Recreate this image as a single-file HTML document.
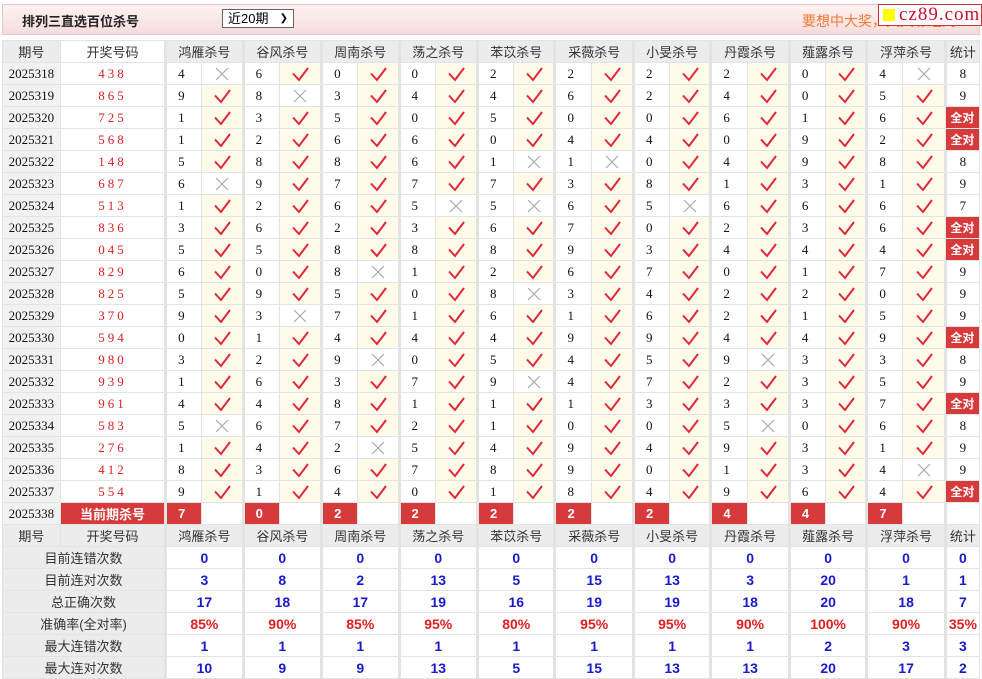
<!DOCTYPE html>
<html><head><meta charset="utf-8"><style>
body{margin:0;background:#fff;width:982px;height:679px;overflow:hidden;font-family:"Liberation Sans","Noto Sans CJK SC",sans-serif;}
.bar{position:absolute;left:2px;top:4px;width:976px;height:29px;background:linear-gradient(#fff2f2,#f6dcdc);border:1px solid #e6c8c8;}
.ttl{position:absolute;left:22px;top:11px;font-size:13px;font-weight:bold;color:#222;}
.sel{position:absolute;left:222px;top:9px;width:72px;height:19px;border:1px solid #666;background:#fff;font-size:13px;line-height:18px;padding-left:5px;box-sizing:border-box;}
.sel span{position:absolute;right:5px;top:0;font-size:10px;}
.ad{position:absolute;left:802px;top:11px;font-size:14px;color:#f07a30;}
.logo{position:absolute;left:878px;top:4px;width:104px;height:22px;background:#fff;border:1px solid #c33;box-sizing:border-box;font-family:"Liberation Serif",serif;font-size:19px;color:#c8102e;line-height:20px;padding-left:20px;letter-spacing:1px}
.logo i{position:absolute;left:4px;top:4px;width:12px;height:12px;background:#ff0;}
table{position:absolute;left:2px;top:40px;border-collapse:collapse;table-layout:fixed;width:978px;}
td{height:21px;border:1px solid #e3e3e3;padding:0;font-size:13px;text-align:center;font-family:"Liberation Serif","Noto Serif CJK SC",serif;color:#111;overflow:hidden;white-space:nowrap;}
tr.h td{background:#ececec;font-family:"Liberation Sans","Noto Sans CJK SC",sans-serif;color:#333;}
tr.h td.w{background:#fff}
td.q{background:#f2f2f2;}
td.k{color:#e02020;letter-spacing:3px;}
td.n{text-align:left;padding-left:11px;border-left:3px solid #e3e3e3;}
td.c{background:#fffbea;}
td.c svg,td.x svg{display:block;margin:0 auto;width:20px;height:16px}
td.g{border-left:3px solid #e3e3e3;}
td.all{background:#d63a3a;color:#fff;font-weight:bold;font-family:"Liberation Sans","Noto Sans CJK SC",sans-serif;font-size:12px}
td.cur{background:#d63a3a;color:#fff;font-weight:bold;font-family:"Liberation Sans","Noto Sans CJK SC",sans-serif}
td.kn{background:#d63a3a;color:#fff;font-weight:bold;text-align:left;padding-left:11px;border-left:3px solid #e3e3e3;font-family:"Liberation Sans",sans-serif}
td.l{background:#ececec;font-family:"Liberation Sans","Noto Sans CJK SC",sans-serif;color:#333;}
td.v{color:#1a1acc;font-weight:bold;font-family:"Liberation Sans",sans-serif;font-size:14px;border-left:3px solid #e3e3e3;}
td.r{color:#e02020;}
</style></head><body>
<svg width="0" height="0" style="position:absolute"><defs>
<symbol id="c" viewBox="0 0 20 16"><path d="M3 7.5 L9 14 L18 2" fill="none" stroke="#e0283a" stroke-width="2"/></symbol>
<symbol id="x" viewBox="0 0 20 16"><path d="M4 2 L16 14 M16 2 L4 14" fill="none" stroke="#aaa" stroke-width="1.2"/></symbol>
</defs></svg>
<div class="bar"></div>
<div class="ttl">排列三直选百位杀号</div>
<div class="sel">近20期<span>&#10095;</span></div>
<div class="ad">要想中大奖，天天彩经网</div>
<div class="logo"><i></i>cz89.com</div>
<table>
<colgroup><col style="width:56px"><col style="width:102px">
<col style="width:35px"><col style="width:40px"><col style="width:35px"><col style="width:41px"><col style="width:35px"><col style="width:40px"><col style="width:35px"><col style="width:41px"><col style="width:35px"><col style="width:40px"><col style="width:35px"><col style="width:41px"><col style="width:35px"><col style="width:40px"><col style="width:35px"><col style="width:41px"><col style="width:35px"><col style="width:40px"><col style="width:35px"><col style="width:41px">
<col style="width:33px"></colgroup>
<tr class="h"><td>期号</td><td class="w">开奖号码</td><td colspan="2" class="g">鸿雁杀号</td><td colspan="2" class="g">谷风杀号</td><td colspan="2" class="g">周南杀号</td><td colspan="2" class="g">荡之杀号</td><td colspan="2" class="g">苯苡杀号</td><td colspan="2" class="g">采薇杀号</td><td colspan="2" class="g">小旻杀号</td><td colspan="2" class="g">丹霞杀号</td><td colspan="2" class="g">薤露杀号</td><td colspan="2" class="g">浮萍杀号</td><td class="g">统计</td></tr>
<tr><td class="q">2025318</td><td class="k">438</td><td class="n">4</td><td class="x"><svg><use href="#x"/></svg></td><td class="n">6</td><td class="c"><svg><use href="#c"/></svg></td><td class="n">0</td><td class="c"><svg><use href="#c"/></svg></td><td class="n">0</td><td class="c"><svg><use href="#c"/></svg></td><td class="n">2</td><td class="c"><svg><use href="#c"/></svg></td><td class="n">2</td><td class="c"><svg><use href="#c"/></svg></td><td class="n">2</td><td class="c"><svg><use href="#c"/></svg></td><td class="n">2</td><td class="c"><svg><use href="#c"/></svg></td><td class="n">0</td><td class="c"><svg><use href="#c"/></svg></td><td class="n">4</td><td class="x"><svg><use href="#x"/></svg></td><td class="g">8</td></tr>
<tr><td class="q">2025319</td><td class="k">865</td><td class="n">9</td><td class="c"><svg><use href="#c"/></svg></td><td class="n">8</td><td class="x"><svg><use href="#x"/></svg></td><td class="n">3</td><td class="c"><svg><use href="#c"/></svg></td><td class="n">4</td><td class="c"><svg><use href="#c"/></svg></td><td class="n">4</td><td class="c"><svg><use href="#c"/></svg></td><td class="n">6</td><td class="c"><svg><use href="#c"/></svg></td><td class="n">2</td><td class="c"><svg><use href="#c"/></svg></td><td class="n">4</td><td class="c"><svg><use href="#c"/></svg></td><td class="n">0</td><td class="c"><svg><use href="#c"/></svg></td><td class="n">5</td><td class="c"><svg><use href="#c"/></svg></td><td class="g">9</td></tr>
<tr><td class="q">2025320</td><td class="k">725</td><td class="n">1</td><td class="c"><svg><use href="#c"/></svg></td><td class="n">3</td><td class="c"><svg><use href="#c"/></svg></td><td class="n">5</td><td class="c"><svg><use href="#c"/></svg></td><td class="n">0</td><td class="c"><svg><use href="#c"/></svg></td><td class="n">5</td><td class="c"><svg><use href="#c"/></svg></td><td class="n">0</td><td class="c"><svg><use href="#c"/></svg></td><td class="n">0</td><td class="c"><svg><use href="#c"/></svg></td><td class="n">6</td><td class="c"><svg><use href="#c"/></svg></td><td class="n">1</td><td class="c"><svg><use href="#c"/></svg></td><td class="n">6</td><td class="c"><svg><use href="#c"/></svg></td><td class="all">全对</td></tr>
<tr><td class="q">2025321</td><td class="k">568</td><td class="n">1</td><td class="c"><svg><use href="#c"/></svg></td><td class="n">2</td><td class="c"><svg><use href="#c"/></svg></td><td class="n">6</td><td class="c"><svg><use href="#c"/></svg></td><td class="n">6</td><td class="c"><svg><use href="#c"/></svg></td><td class="n">0</td><td class="c"><svg><use href="#c"/></svg></td><td class="n">4</td><td class="c"><svg><use href="#c"/></svg></td><td class="n">4</td><td class="c"><svg><use href="#c"/></svg></td><td class="n">0</td><td class="c"><svg><use href="#c"/></svg></td><td class="n">9</td><td class="c"><svg><use href="#c"/></svg></td><td class="n">2</td><td class="c"><svg><use href="#c"/></svg></td><td class="all">全对</td></tr>
<tr><td class="q">2025322</td><td class="k">148</td><td class="n">5</td><td class="c"><svg><use href="#c"/></svg></td><td class="n">8</td><td class="c"><svg><use href="#c"/></svg></td><td class="n">8</td><td class="c"><svg><use href="#c"/></svg></td><td class="n">6</td><td class="c"><svg><use href="#c"/></svg></td><td class="n">1</td><td class="x"><svg><use href="#x"/></svg></td><td class="n">1</td><td class="x"><svg><use href="#x"/></svg></td><td class="n">0</td><td class="c"><svg><use href="#c"/></svg></td><td class="n">4</td><td class="c"><svg><use href="#c"/></svg></td><td class="n">9</td><td class="c"><svg><use href="#c"/></svg></td><td class="n">8</td><td class="c"><svg><use href="#c"/></svg></td><td class="g">8</td></tr>
<tr><td class="q">2025323</td><td class="k">687</td><td class="n">6</td><td class="x"><svg><use href="#x"/></svg></td><td class="n">9</td><td class="c"><svg><use href="#c"/></svg></td><td class="n">7</td><td class="c"><svg><use href="#c"/></svg></td><td class="n">7</td><td class="c"><svg><use href="#c"/></svg></td><td class="n">7</td><td class="c"><svg><use href="#c"/></svg></td><td class="n">3</td><td class="c"><svg><use href="#c"/></svg></td><td class="n">8</td><td class="c"><svg><use href="#c"/></svg></td><td class="n">1</td><td class="c"><svg><use href="#c"/></svg></td><td class="n">3</td><td class="c"><svg><use href="#c"/></svg></td><td class="n">1</td><td class="c"><svg><use href="#c"/></svg></td><td class="g">9</td></tr>
<tr><td class="q">2025324</td><td class="k">513</td><td class="n">1</td><td class="c"><svg><use href="#c"/></svg></td><td class="n">2</td><td class="c"><svg><use href="#c"/></svg></td><td class="n">6</td><td class="c"><svg><use href="#c"/></svg></td><td class="n">5</td><td class="x"><svg><use href="#x"/></svg></td><td class="n">5</td><td class="x"><svg><use href="#x"/></svg></td><td class="n">6</td><td class="c"><svg><use href="#c"/></svg></td><td class="n">5</td><td class="x"><svg><use href="#x"/></svg></td><td class="n">6</td><td class="c"><svg><use href="#c"/></svg></td><td class="n">6</td><td class="c"><svg><use href="#c"/></svg></td><td class="n">6</td><td class="c"><svg><use href="#c"/></svg></td><td class="g">7</td></tr>
<tr><td class="q">2025325</td><td class="k">836</td><td class="n">3</td><td class="c"><svg><use href="#c"/></svg></td><td class="n">6</td><td class="c"><svg><use href="#c"/></svg></td><td class="n">2</td><td class="c"><svg><use href="#c"/></svg></td><td class="n">3</td><td class="c"><svg><use href="#c"/></svg></td><td class="n">6</td><td class="c"><svg><use href="#c"/></svg></td><td class="n">7</td><td class="c"><svg><use href="#c"/></svg></td><td class="n">0</td><td class="c"><svg><use href="#c"/></svg></td><td class="n">2</td><td class="c"><svg><use href="#c"/></svg></td><td class="n">3</td><td class="c"><svg><use href="#c"/></svg></td><td class="n">6</td><td class="c"><svg><use href="#c"/></svg></td><td class="all">全对</td></tr>
<tr><td class="q">2025326</td><td class="k">045</td><td class="n">5</td><td class="c"><svg><use href="#c"/></svg></td><td class="n">5</td><td class="c"><svg><use href="#c"/></svg></td><td class="n">8</td><td class="c"><svg><use href="#c"/></svg></td><td class="n">8</td><td class="c"><svg><use href="#c"/></svg></td><td class="n">8</td><td class="c"><svg><use href="#c"/></svg></td><td class="n">9</td><td class="c"><svg><use href="#c"/></svg></td><td class="n">3</td><td class="c"><svg><use href="#c"/></svg></td><td class="n">4</td><td class="c"><svg><use href="#c"/></svg></td><td class="n">4</td><td class="c"><svg><use href="#c"/></svg></td><td class="n">4</td><td class="c"><svg><use href="#c"/></svg></td><td class="all">全对</td></tr>
<tr><td class="q">2025327</td><td class="k">829</td><td class="n">6</td><td class="c"><svg><use href="#c"/></svg></td><td class="n">0</td><td class="c"><svg><use href="#c"/></svg></td><td class="n">8</td><td class="x"><svg><use href="#x"/></svg></td><td class="n">1</td><td class="c"><svg><use href="#c"/></svg></td><td class="n">2</td><td class="c"><svg><use href="#c"/></svg></td><td class="n">6</td><td class="c"><svg><use href="#c"/></svg></td><td class="n">7</td><td class="c"><svg><use href="#c"/></svg></td><td class="n">0</td><td class="c"><svg><use href="#c"/></svg></td><td class="n">1</td><td class="c"><svg><use href="#c"/></svg></td><td class="n">7</td><td class="c"><svg><use href="#c"/></svg></td><td class="g">9</td></tr>
<tr><td class="q">2025328</td><td class="k">825</td><td class="n">5</td><td class="c"><svg><use href="#c"/></svg></td><td class="n">9</td><td class="c"><svg><use href="#c"/></svg></td><td class="n">5</td><td class="c"><svg><use href="#c"/></svg></td><td class="n">0</td><td class="c"><svg><use href="#c"/></svg></td><td class="n">8</td><td class="x"><svg><use href="#x"/></svg></td><td class="n">3</td><td class="c"><svg><use href="#c"/></svg></td><td class="n">4</td><td class="c"><svg><use href="#c"/></svg></td><td class="n">2</td><td class="c"><svg><use href="#c"/></svg></td><td class="n">2</td><td class="c"><svg><use href="#c"/></svg></td><td class="n">0</td><td class="c"><svg><use href="#c"/></svg></td><td class="g">9</td></tr>
<tr><td class="q">2025329</td><td class="k">370</td><td class="n">9</td><td class="c"><svg><use href="#c"/></svg></td><td class="n">3</td><td class="x"><svg><use href="#x"/></svg></td><td class="n">7</td><td class="c"><svg><use href="#c"/></svg></td><td class="n">1</td><td class="c"><svg><use href="#c"/></svg></td><td class="n">6</td><td class="c"><svg><use href="#c"/></svg></td><td class="n">1</td><td class="c"><svg><use href="#c"/></svg></td><td class="n">6</td><td class="c"><svg><use href="#c"/></svg></td><td class="n">2</td><td class="c"><svg><use href="#c"/></svg></td><td class="n">1</td><td class="c"><svg><use href="#c"/></svg></td><td class="n">5</td><td class="c"><svg><use href="#c"/></svg></td><td class="g">9</td></tr>
<tr><td class="q">2025330</td><td class="k">594</td><td class="n">0</td><td class="c"><svg><use href="#c"/></svg></td><td class="n">1</td><td class="c"><svg><use href="#c"/></svg></td><td class="n">4</td><td class="c"><svg><use href="#c"/></svg></td><td class="n">4</td><td class="c"><svg><use href="#c"/></svg></td><td class="n">4</td><td class="c"><svg><use href="#c"/></svg></td><td class="n">9</td><td class="c"><svg><use href="#c"/></svg></td><td class="n">9</td><td class="c"><svg><use href="#c"/></svg></td><td class="n">4</td><td class="c"><svg><use href="#c"/></svg></td><td class="n">4</td><td class="c"><svg><use href="#c"/></svg></td><td class="n">9</td><td class="c"><svg><use href="#c"/></svg></td><td class="all">全对</td></tr>
<tr><td class="q">2025331</td><td class="k">980</td><td class="n">3</td><td class="c"><svg><use href="#c"/></svg></td><td class="n">2</td><td class="c"><svg><use href="#c"/></svg></td><td class="n">9</td><td class="x"><svg><use href="#x"/></svg></td><td class="n">0</td><td class="c"><svg><use href="#c"/></svg></td><td class="n">5</td><td class="c"><svg><use href="#c"/></svg></td><td class="n">4</td><td class="c"><svg><use href="#c"/></svg></td><td class="n">5</td><td class="c"><svg><use href="#c"/></svg></td><td class="n">9</td><td class="x"><svg><use href="#x"/></svg></td><td class="n">3</td><td class="c"><svg><use href="#c"/></svg></td><td class="n">3</td><td class="c"><svg><use href="#c"/></svg></td><td class="g">8</td></tr>
<tr><td class="q">2025332</td><td class="k">939</td><td class="n">1</td><td class="c"><svg><use href="#c"/></svg></td><td class="n">6</td><td class="c"><svg><use href="#c"/></svg></td><td class="n">3</td><td class="c"><svg><use href="#c"/></svg></td><td class="n">7</td><td class="c"><svg><use href="#c"/></svg></td><td class="n">9</td><td class="x"><svg><use href="#x"/></svg></td><td class="n">4</td><td class="c"><svg><use href="#c"/></svg></td><td class="n">7</td><td class="c"><svg><use href="#c"/></svg></td><td class="n">2</td><td class="c"><svg><use href="#c"/></svg></td><td class="n">3</td><td class="c"><svg><use href="#c"/></svg></td><td class="n">5</td><td class="c"><svg><use href="#c"/></svg></td><td class="g">9</td></tr>
<tr><td class="q">2025333</td><td class="k">961</td><td class="n">4</td><td class="c"><svg><use href="#c"/></svg></td><td class="n">4</td><td class="c"><svg><use href="#c"/></svg></td><td class="n">8</td><td class="c"><svg><use href="#c"/></svg></td><td class="n">1</td><td class="c"><svg><use href="#c"/></svg></td><td class="n">1</td><td class="c"><svg><use href="#c"/></svg></td><td class="n">1</td><td class="c"><svg><use href="#c"/></svg></td><td class="n">3</td><td class="c"><svg><use href="#c"/></svg></td><td class="n">3</td><td class="c"><svg><use href="#c"/></svg></td><td class="n">3</td><td class="c"><svg><use href="#c"/></svg></td><td class="n">7</td><td class="c"><svg><use href="#c"/></svg></td><td class="all">全对</td></tr>
<tr><td class="q">2025334</td><td class="k">583</td><td class="n">5</td><td class="x"><svg><use href="#x"/></svg></td><td class="n">6</td><td class="c"><svg><use href="#c"/></svg></td><td class="n">7</td><td class="c"><svg><use href="#c"/></svg></td><td class="n">2</td><td class="c"><svg><use href="#c"/></svg></td><td class="n">1</td><td class="c"><svg><use href="#c"/></svg></td><td class="n">0</td><td class="c"><svg><use href="#c"/></svg></td><td class="n">0</td><td class="c"><svg><use href="#c"/></svg></td><td class="n">5</td><td class="x"><svg><use href="#x"/></svg></td><td class="n">0</td><td class="c"><svg><use href="#c"/></svg></td><td class="n">6</td><td class="c"><svg><use href="#c"/></svg></td><td class="g">8</td></tr>
<tr><td class="q">2025335</td><td class="k">276</td><td class="n">1</td><td class="c"><svg><use href="#c"/></svg></td><td class="n">4</td><td class="c"><svg><use href="#c"/></svg></td><td class="n">2</td><td class="x"><svg><use href="#x"/></svg></td><td class="n">5</td><td class="c"><svg><use href="#c"/></svg></td><td class="n">4</td><td class="c"><svg><use href="#c"/></svg></td><td class="n">9</td><td class="c"><svg><use href="#c"/></svg></td><td class="n">4</td><td class="c"><svg><use href="#c"/></svg></td><td class="n">9</td><td class="c"><svg><use href="#c"/></svg></td><td class="n">3</td><td class="c"><svg><use href="#c"/></svg></td><td class="n">1</td><td class="c"><svg><use href="#c"/></svg></td><td class="g">9</td></tr>
<tr><td class="q">2025336</td><td class="k">412</td><td class="n">8</td><td class="c"><svg><use href="#c"/></svg></td><td class="n">3</td><td class="c"><svg><use href="#c"/></svg></td><td class="n">6</td><td class="c"><svg><use href="#c"/></svg></td><td class="n">7</td><td class="c"><svg><use href="#c"/></svg></td><td class="n">8</td><td class="c"><svg><use href="#c"/></svg></td><td class="n">9</td><td class="c"><svg><use href="#c"/></svg></td><td class="n">0</td><td class="c"><svg><use href="#c"/></svg></td><td class="n">1</td><td class="c"><svg><use href="#c"/></svg></td><td class="n">3</td><td class="c"><svg><use href="#c"/></svg></td><td class="n">4</td><td class="x"><svg><use href="#x"/></svg></td><td class="g">9</td></tr>
<tr><td class="q">2025337</td><td class="k">554</td><td class="n">9</td><td class="c"><svg><use href="#c"/></svg></td><td class="n">1</td><td class="c"><svg><use href="#c"/></svg></td><td class="n">4</td><td class="c"><svg><use href="#c"/></svg></td><td class="n">0</td><td class="c"><svg><use href="#c"/></svg></td><td class="n">1</td><td class="c"><svg><use href="#c"/></svg></td><td class="n">8</td><td class="c"><svg><use href="#c"/></svg></td><td class="n">4</td><td class="c"><svg><use href="#c"/></svg></td><td class="n">9</td><td class="c"><svg><use href="#c"/></svg></td><td class="n">6</td><td class="c"><svg><use href="#c"/></svg></td><td class="n">4</td><td class="c"><svg><use href="#c"/></svg></td><td class="all">全对</td></tr>
<tr><td class="q">2025338</td><td class="cur">当前期杀号</td><td class="kn">7</td><td></td><td class="kn">0</td><td></td><td class="kn">2</td><td></td><td class="kn">2</td><td></td><td class="kn">2</td><td></td><td class="kn">2</td><td></td><td class="kn">2</td><td></td><td class="kn">4</td><td></td><td class="kn">4</td><td></td><td class="kn">7</td><td></td><td class="g"></td></tr>
<tr class="h"><td>期号</td><td>开奖号码</td><td colspan="2" class="g">鸿雁杀号</td><td colspan="2" class="g">谷风杀号</td><td colspan="2" class="g">周南杀号</td><td colspan="2" class="g">荡之杀号</td><td colspan="2" class="g">苯苡杀号</td><td colspan="2" class="g">采薇杀号</td><td colspan="2" class="g">小旻杀号</td><td colspan="2" class="g">丹霞杀号</td><td colspan="2" class="g">薤露杀号</td><td colspan="2" class="g">浮萍杀号</td><td class="g">统计</td></tr>
<tr><td colspan="2" class="l">目前连错次数</td><td colspan="2" class="v">0</td><td colspan="2" class="v">0</td><td colspan="2" class="v">0</td><td colspan="2" class="v">0</td><td colspan="2" class="v">0</td><td colspan="2" class="v">0</td><td colspan="2" class="v">0</td><td colspan="2" class="v">0</td><td colspan="2" class="v">0</td><td colspan="2" class="v">0</td><td class="v">0</td></tr>
<tr><td colspan="2" class="l">目前连对次数</td><td colspan="2" class="v">3</td><td colspan="2" class="v">8</td><td colspan="2" class="v">2</td><td colspan="2" class="v">13</td><td colspan="2" class="v">5</td><td colspan="2" class="v">15</td><td colspan="2" class="v">13</td><td colspan="2" class="v">3</td><td colspan="2" class="v">20</td><td colspan="2" class="v">1</td><td class="v">1</td></tr>
<tr><td colspan="2" class="l">总正确次数</td><td colspan="2" class="v">17</td><td colspan="2" class="v">18</td><td colspan="2" class="v">17</td><td colspan="2" class="v">19</td><td colspan="2" class="v">16</td><td colspan="2" class="v">19</td><td colspan="2" class="v">19</td><td colspan="2" class="v">18</td><td colspan="2" class="v">20</td><td colspan="2" class="v">18</td><td class="v">7</td></tr>
<tr><td colspan="2" class="l">准确率(全对率)</td><td colspan="2" class="v r">85%</td><td colspan="2" class="v r">90%</td><td colspan="2" class="v r">85%</td><td colspan="2" class="v r">95%</td><td colspan="2" class="v r">80%</td><td colspan="2" class="v r">95%</td><td colspan="2" class="v r">95%</td><td colspan="2" class="v r">90%</td><td colspan="2" class="v r">100%</td><td colspan="2" class="v r">90%</td><td class="v r">35%</td></tr>
<tr><td colspan="2" class="l">最大连错次数</td><td colspan="2" class="v">1</td><td colspan="2" class="v">1</td><td colspan="2" class="v">1</td><td colspan="2" class="v">1</td><td colspan="2" class="v">1</td><td colspan="2" class="v">1</td><td colspan="2" class="v">1</td><td colspan="2" class="v">1</td><td colspan="2" class="v">2</td><td colspan="2" class="v">3</td><td class="v">3</td></tr>
<tr><td colspan="2" class="l">最大连对次数</td><td colspan="2" class="v">10</td><td colspan="2" class="v">9</td><td colspan="2" class="v">9</td><td colspan="2" class="v">13</td><td colspan="2" class="v">5</td><td colspan="2" class="v">15</td><td colspan="2" class="v">13</td><td colspan="2" class="v">13</td><td colspan="2" class="v">20</td><td colspan="2" class="v">17</td><td class="v">2</td></tr>
</table>
</body></html>
